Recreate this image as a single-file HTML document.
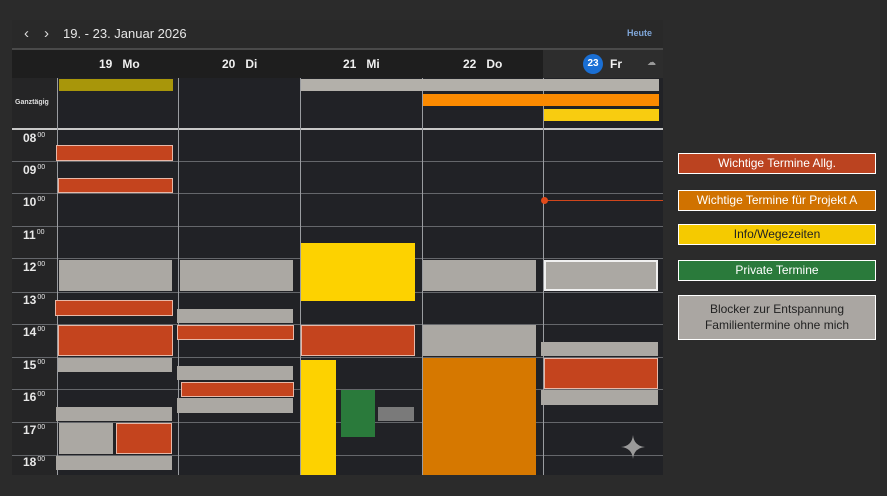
<!DOCTYPE html>
<html><head><meta charset="utf-8"><style>
*{margin:0;padding:0;box-sizing:border-box}
body{width:887px;height:496px;background:#2b2b2b;position:relative;overflow:hidden;font-family:"Liberation Sans",sans-serif}
.a{position:absolute}
.r{background:#c4441e;border:1px solid #e8b8a8}
.g{background:#aba8a3}
.y{background:#fdd200}
.hl{position:absolute;left:12px;width:651px;height:1px;background:#65676b}
.vl{position:absolute;top:78px;width:1px;height:397px;background:#9a9ca0}
.t{position:absolute;left:23px;color:#e8e8e8;font-size:12px;font-weight:bold}
.t sup{font-size:7px;font-weight:normal;vertical-align:5px;margin-left:1px}
.dh{position:absolute;top:57px;color:#f0f0f0;font-size:12px;font-weight:bold}
.lg{position:absolute;left:678px;width:198px;border:1px solid #fff;font-size:12px;text-align:center;line-height:19px}
</style></head><body>
<div class="a" style="left:12px;top:20px;width:651px;height:28px;background:#292929"></div>
<div class="a" style="left:12px;top:48px;width:651px;height:2px;background:#4a4a4a"></div>
<div class="a" style="left:12px;top:50px;width:651px;height:28px;background:#1e1e1e"></div>
<div class="a" style="left:543px;top:50px;width:120px;height:28px;background:#2d2d2d"></div>
<div class="a" style="left:12px;top:78px;width:651px;height:397px;background:#212226"></div>
<div class="a" style="left:12px;top:78px;width:45px;height:397px;background:#252526"></div>
<div class="a" style="left:24px;top:25px;color:#ddd;font-size:15px">&#8249;</div>
<div class="a" style="left:44px;top:25px;color:#ddd;font-size:15px">&#8250;</div>
<div class="a" style="left:63px;top:26px;color:#e6e6e6;font-size:13px">19. - 23. Januar 2026</div>
<div class="a" style="left:627px;top:28px;color:#7fa6d8;font-size:9px;font-weight:bold">Heute</div>
<div class="dh" style="left:99px">19&nbsp;&nbsp;&nbsp;Mo</div>
<div class="dh" style="left:222px">20&nbsp;&nbsp;&nbsp;Di</div>
<div class="dh" style="left:343px">21&nbsp;&nbsp;&nbsp;Mi</div>
<div class="dh" style="left:463px">22&nbsp;&nbsp;&nbsp;Do</div>
<div class="a" style="left:583px;top:54px;width:20px;height:20px;border-radius:50%;background:#1a6fd4;color:#fff;font-size:10px;font-weight:bold;text-align:center;line-height:20px">23</div>
<div class="dh" style="left:610px">Fr</div>
<div class="a" style="left:647px;top:57px;color:#999;font-size:9px">☁</div>
<div class="a" style="left:15px;top:99px;color:#ddd;font-size:7px;font-weight:bold">Ganztägig</div>
<div class="a" style="left:12px;top:128px;width:651px;height:2px;background:#c8c8c8"></div>
<div class="hl" style="top:161px"></div><div class="hl" style="top:193px"></div><div class="hl" style="top:226px"></div><div class="hl" style="top:258px"></div><div class="hl" style="top:292px"></div><div class="hl" style="top:324px"></div><div class="hl" style="top:357px"></div><div class="hl" style="top:389px"></div><div class="hl" style="top:422px"></div><div class="hl" style="top:455px"></div>
<div class="vl" style="left:57px"></div><div class="vl" style="left:178px"></div><div class="vl" style="left:300px"></div><div class="vl" style="left:422px"></div><div class="vl" style="left:543px"></div>
<div class="t" style="top:131px">08<sup>00</sup></div>
<div class="t" style="top:163px">09<sup>00</sup></div>
<div class="t" style="top:195px">10<sup>00</sup></div>
<div class="t" style="top:228px">11<sup>00</sup></div>
<div class="t" style="top:260px">12<sup>00</sup></div>
<div class="t" style="top:293px">13<sup>00</sup></div>
<div class="t" style="top:325px">14<sup>00</sup></div>
<div class="t" style="top:358px">15<sup>00</sup></div>
<div class="t" style="top:390px">16<sup>00</sup></div>
<div class="t" style="top:423px">17<sup>00</sup></div>
<div class="t" style="top:455px">18<sup>00</sup></div>
<div class="a" style="left:59px;top:79px;width:114px;height:12px;background:#a8960a"></div>
<div class="a" style="left:301px;top:79px;width:358px;height:12px;background:#b3b0aa"></div>
<div class="a" style="left:423px;top:94px;width:236px;height:12px;background:#fb8a00"></div>
<div class="a" style="left:544px;top:109px;width:115px;height:12px;background:#f8cc10"></div>
<div class="a r" style="left:56px;top:145px;width:117px;height:16px"></div>
<div class="a r" style="left:58px;top:178px;width:115px;height:15px"></div>
<div class="a g" style="left:59px;top:260px;width:113px;height:31px"></div>
<div class="a r" style="left:55px;top:300px;width:118px;height:16px"></div>
<div class="a r" style="left:58px;top:325px;width:115px;height:31px"></div>
<div class="a g" style="left:58px;top:358px;width:114px;height:14px"></div>
<div class="a g" style="left:56px;top:407px;width:116px;height:14px"></div>
<div class="a g" style="left:59px;top:423px;width:54px;height:31px"></div>
<div class="a r" style="left:116px;top:423px;width:56px;height:31px"></div>
<div class="a g" style="left:56px;top:456px;width:116px;height:14px"></div>
<div class="a g" style="left:180px;top:260px;width:113px;height:31px"></div>
<div class="a g" style="left:177px;top:309px;width:116px;height:14px"></div>
<div class="a r" style="left:177px;top:325px;width:117px;height:15px"></div>
<div class="a g" style="left:177px;top:366px;width:116px;height:14px"></div>
<div class="a r" style="left:181px;top:382px;width:113px;height:15px"></div>
<div class="a g" style="left:177px;top:398px;width:116px;height:15px"></div>
<div class="a y" style="left:301px;top:243px;width:114px;height:58px"></div>
<div class="a r" style="left:301px;top:325px;width:114px;height:31px"></div>
<div class="a y" style="left:301px;top:360px;width:35px;height:115px"></div>
<div class="a" style="left:341px;top:390px;width:34px;height:47px;background:#2a7a3b"></div>
<div class="a" style="left:378px;top:407px;width:36px;height:14px;background:#7a7a7a"></div>
<div class="a g" style="left:423px;top:260px;width:113px;height:31px"></div>
<div class="a g" style="left:423px;top:325px;width:113px;height:31px"></div>
<div class="a" style="left:423px;top:358px;width:113px;height:117px;background:#d67800"></div>
<div class="a g" style="left:544px;top:260px;width:114px;height:31px;border:2px solid #f0f0f0"></div>
<div class="a g" style="left:541px;top:342px;width:117px;height:14px"></div>
<div class="a r" style="left:544px;top:358px;width:114px;height:31px"></div>
<div class="a g" style="left:541px;top:390px;width:117px;height:15px"></div>
<div class="a" style="left:544px;top:200px;width:119px;height:1px;background:#d0461c"></div>
<div class="a" style="left:541px;top:197px;width:7px;height:7px;border-radius:50%;background:#e04a1a"></div>
<svg class="a" style="left:620px;top:434px" width="26" height="26" viewBox="0 0 26 26"><path d="M13 1 Q14 12 25 13 Q14 14 13 25 Q12 14 1 13 Q12 12 13 1Z" fill="#9a9a9a"/></svg>
<div class="lg" style="top:153px;height:21px;background:#bb4320;color:#fff">Wichtige Termine Allg.</div>
<div class="lg" style="top:190px;height:21px;background:#d07200;color:#fff">Wichtige Termine für Projekt A</div>
<div class="lg" style="top:224px;height:21px;background:#f5ca00;color:#222">Info/Wegezeiten</div>
<div class="lg" style="top:260px;height:21px;background:#2a7a3b;color:#fff">Private Termine</div>
<div class="lg" style="top:295px;height:45px;background:#aaa6a2;color:#222;padding-top:5px;line-height:16px">Blocker zur Entspannung<br>Familientermine ohne mich</div>
</body></html>
